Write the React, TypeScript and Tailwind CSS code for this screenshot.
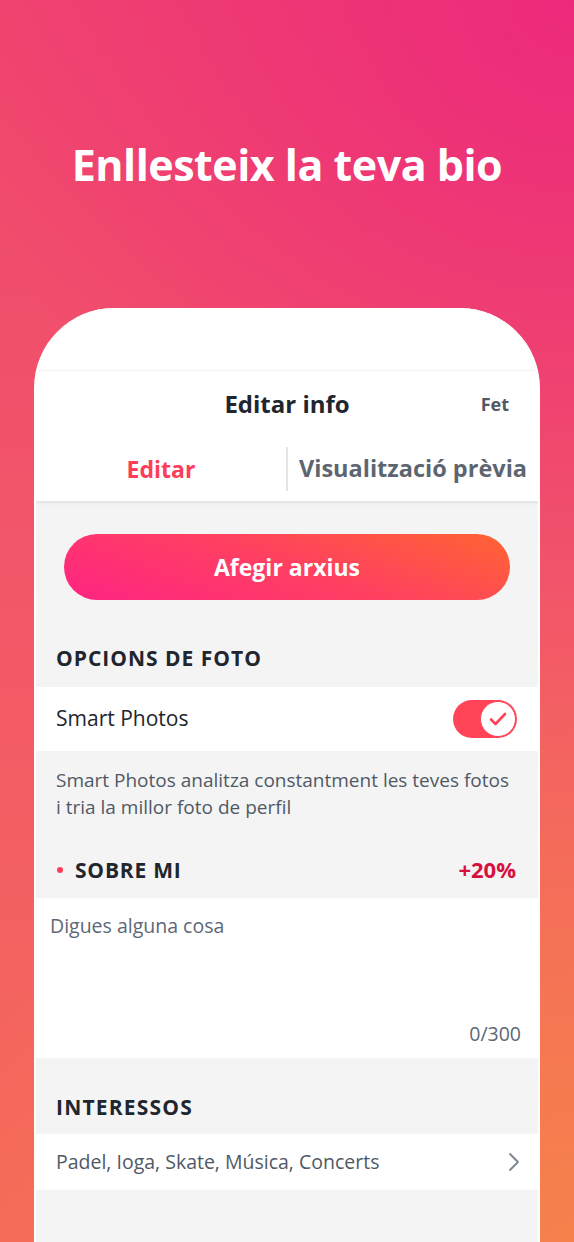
const font = { fontFamily: '"Open Sans", "Liberation Sans", sans-serif' };

const App = () => {
  return (
    <div
      className="min-h-[1242px] w-full overflow-hidden bg-[radial-gradient(circle_at_100%_0%,rgba(236,36,126,0.85)_0%,rgba(236,36,126,0)_45%),radial-gradient(circle_at_100%_100%,rgba(246,132,74,0.9)_0%,rgba(246,132,74,0)_45%),linear-gradient(to_bottom,#f0456e_0%,#f25868_50%,#f56b59_100%)]"
      style={font}
    >
      {/* headline */}
      <div className="flex h-[308px] items-start justify-center pt-[137px]">
        <h1 className="text-[43px] leading-[56px] font-bold tracking-[-0.5px] text-white">Enllesteix la teva bio</h1>
      </div>

      {/* phone card */}
      <div className="mx-[34px] min-h-[934px] overflow-hidden rounded-t-[80px] border-x-2 border-white bg-[#f4f4f4]">
        <div className="bg-white">
          <div className="h-[63px] border-b border-[#f3f3f3]" />
          <div className="relative flex h-[66px] items-center justify-center">
            <span className="text-[24px] font-bold text-[#21262e]">Editar info</span>
            <span className="absolute right-[29px] text-[18px] font-bold text-[#505965]">Fet</span>
          </div>
          <div className="flex h-[64px] items-center shadow-[0_2px_3px_rgba(0,0,0,0.07)]">
            <div className="flex flex-1 justify-center">
              <span className="text-[23px] font-bold text-[#fd3d5a]">Editar</span>
            </div>
            <div className="h-[44px] w-[2px] bg-[#e3e5e8]" />
            <div className="flex flex-1 justify-center">
              <span className="text-[23.5px] font-bold whitespace-nowrap text-[#5c6570]">Visualització prèvia</span>
            </div>
          </div>
        </div>

        <div className="px-[28px] pt-[33px]">
          <button className="flex h-[66px] w-full items-center justify-center rounded-full bg-[linear-gradient(20deg,#fe2483_0%,#ff3f62_50%,#ff6432_100%)] text-[23px] font-bold text-white">
            Afegir arxius
          </button>
        </div>

        <div className="flex h-[87px] items-end px-[20px] pb-[13px]">
          <span className="text-[21px] font-bold tracking-[1px] text-[#21262e]">OPCIONS DE FOTO</span>
        </div>
        <div className="flex h-[64px] items-center justify-between bg-white pr-[21px] pl-[20px]">
          <span className="text-[21px] text-[#21262e]">Smart Photos</span>
          <div className="flex h-[38px] w-[64px] items-center justify-end rounded-full bg-[#ff4458] pr-[1px]">
            <div className="flex h-[36px] w-[36px] items-center justify-center rounded-full border border-[#ff4458] bg-white">
              <svg width="18" height="14" viewBox="0 0 18 14" fill="none">
                <path d="M2 7.5 L6.5 12 L16 2" stroke="#ff4458" strokeWidth="2.6" strokeLinecap="round" strokeLinejoin="round" />
              </svg>
            </div>
          </div>
        </div>

        <div className="px-[20px] pt-[16px] text-[19px] leading-[27px] text-[#505965]">
          Smart Photos analitza constantment les teves fotos
          <br />i tria la millor foto de perfil
        </div>

        <div className="flex h-[77px] items-end justify-between pr-[22px] pl-[21px] pb-[12px]">
          <div className="flex items-center">
            <span className="mr-[12px] h-[6px] w-[6px] rounded-full bg-[#fd3d5a]" />
            <span className="text-[21px] font-bold tracking-[0.8px] text-[#21262e]">SOBRE MI</span>
          </div>
          <span className="text-[22px] font-bold text-[#d8103d]">+20%</span>
        </div>

        <div className="flex h-[160px] flex-col justify-between bg-white pt-[13px] pr-[17px] pb-[10px] pl-[14px]">
          <span className="text-[19.5px] text-[#5e6775]">Digues alguna cosa</span>
          <span className="self-end text-[19.5px] text-[#5e6775]">0/300</span>
        </div>

        <div className="flex h-[76px] items-end px-[20px] pb-[11px]">
          <span className="text-[21px] font-bold tracking-[1.2px] text-[#21262e]">INTERESSOS</span>
        </div>
        <div className="flex h-[56px] items-center justify-between bg-white pr-[18px] pl-[20px]">
          <span className="text-[19.5px] text-[#505965]">Padel, Ioga, Skate, Música, Concerts</span>
          <svg width="12" height="20" viewBox="0 0 12 20" fill="none">
            <path d="M2 2 L10 10 L2 18" stroke="#7b8491" strokeWidth="1.8" strokeLinecap="round" strokeLinejoin="round" />
          </svg>
        </div>
      </div>
    </div>
  );
};

export default App;
